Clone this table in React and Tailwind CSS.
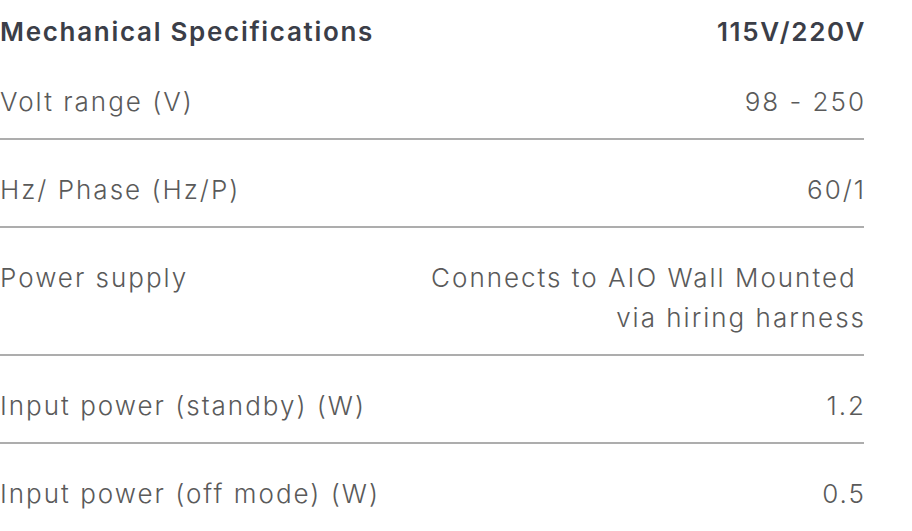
import React from 'react';

const ROWS = [
  { label: 'Volt range (V)', value: '98 - 250' },
  { label: 'Hz/ Phase (Hz/P)', value: '60/1' },
  {
    label: 'Power supply',
    value: (
      <>
        Connects to AIO Wall Mounted{'\u00a0'}
        <br />
        via hiring harness
      </>
    ),
  },
  { label: 'Input power (standby) (W)', value: '1.2' },
  { label: 'Input power (off mode) (W)', value: '0.5' },
];

export default function App() {
  return (
    <div className="min-h-screen bg-white font-['Inter',sans-serif] text-[26px] leading-[40px]">
      <div className="w-[864px]">
        <div className="flex justify-between pt-[12px] font-semibold tracking-[1.7px] text-[#3b3e48]">
          <span>Mechanical Specifications</span>
          <span className="-mr-[2px]">115V/220V</span>
        </div>
        {ROWS.map((row, i) => (
          <div
            key={i}
            className={`flex justify-between items-start pt-[30px] pb-[16px] tracking-[2px] text-[#5a5a5a] font-light ${
              i < ROWS.length - 1 ? 'border-b-2 border-[#adadad]' : ''
            }`}
          >
            <span>{row.label}</span>
            <span className="text-right -mr-[2px]">{row.value}</span>
          </div>
        ))}
      </div>
    </div>
  );
}
